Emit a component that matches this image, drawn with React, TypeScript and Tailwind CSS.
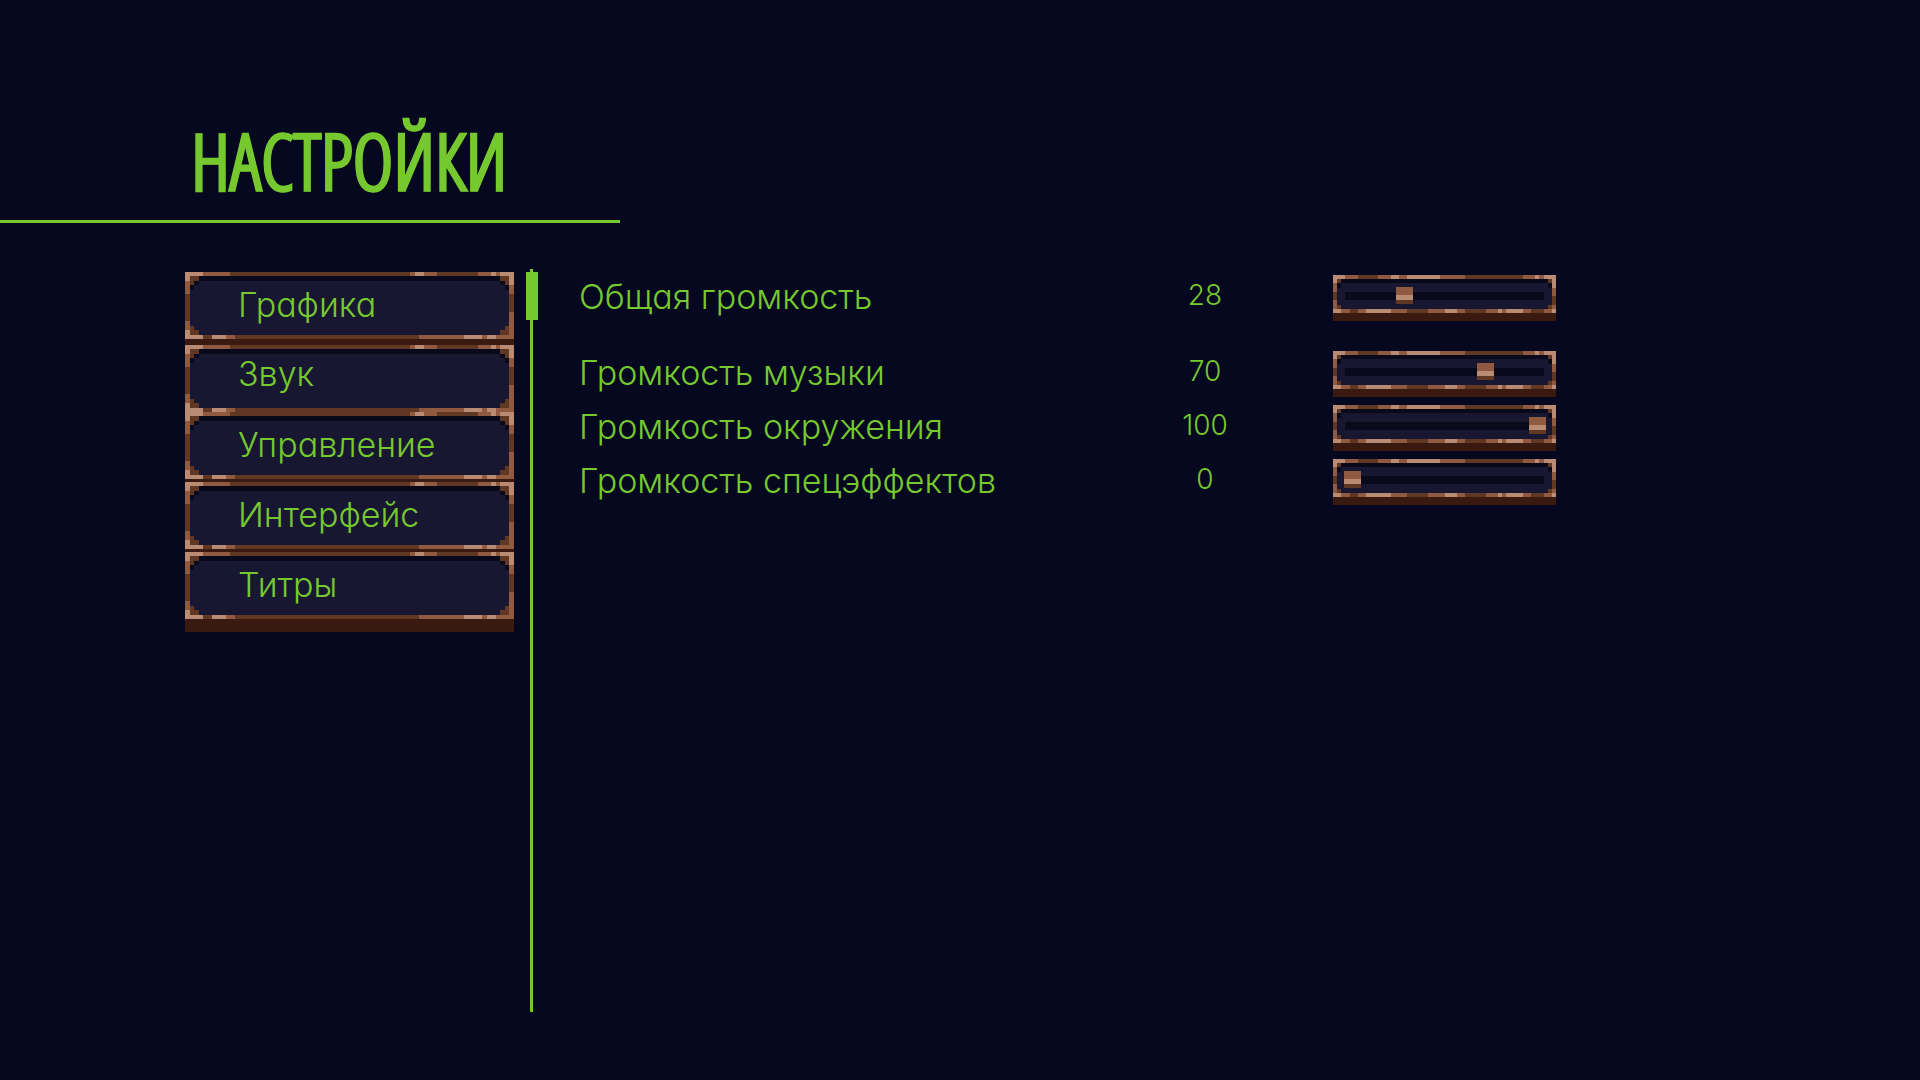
import { useState } from "react";

type Piece = [x: number, y: number, w: number, h: number];

const LIGHT = "#b98b73";
const MID = "#8f5a3f";
const DARK = "#5f3723";
const SHADOW = "#080a1c";
const PANEL = "#181732";

function Pieces({ fill, list }: { fill: string; list: Piece[] }) {
  return (
    <g fill={fill}>
      {list.map(([x, y, w, h], i) => (
        <rect key={i} x={x} y={y} width={w} height={h} />
      ))}
    </g>
  );
}

function ButtonFrame() {
  return (
    <svg
      aria-hidden="true"
      viewBox="0 0 73 15"
      preserveAspectRatio="none"
      shapeRendering="crispEdges"
      className="absolute inset-x-0 top-0 h-[67px] w-full"
    >
      <rect width="73" height="15" fill={DARK} />
      <rect x="1" y="1" width="71" height="13" fill={PANEL} />
      <Pieces fill={SHADOW} list={[[3, 1, 67, 1], [2, 2, 1, 1], [1, 3, 1, 1], [70, 2, 1, 1], [71, 3, 1, 1]]} />
      <Pieces
        fill={DARK}
        list={[[1, 1, 2, 1], [1, 2, 1, 1], [70, 1, 2, 1], [71, 2, 1, 1], [1, 12, 1, 1], [1, 13, 2, 1], [71, 12, 1, 1], [70, 13, 2, 1]]}
      />
      <Pieces
        fill={MID}
        list={[
          [4, 0, 6, 1], [50, 0, 1, 1], [53, 0, 3, 1], [65, 0, 3, 1], [69, 0, 1, 1],
          [9, 14, 2, 1], [52, 14, 10, 1], [66, 14, 1, 1], [69, 14, 4, 1],
          [0, 2, 1, 3], [0, 11, 1, 2], [72, 3, 1, 2], [72, 9, 1, 6],
        ]}
      />
      <Pieces
        fill={LIGHT}
        list={[
          [0, 0, 4, 1], [51, 0, 2, 1], [68, 0, 1, 1], [70, 0, 3, 1],
          [0, 14, 4, 1], [6, 14, 3, 1], [62, 14, 4, 1], [67, 14, 2, 1],
          [0, 0, 1, 2], [0, 13, 1, 2], [72, 0, 1, 3],
        ]}
      />
    </svg>
  );
}

function SliderFrame() {
  return (
    <svg
      aria-hidden="true"
      viewBox="0 0 54 9"
      preserveAspectRatio="none"
      shapeRendering="crispEdges"
      className="absolute inset-x-0 top-0 h-[38px] w-full"
    >
      <rect width="54" height="9" fill={DARK} />
      <rect x="1" y="1" width="52" height="7" fill={PANEL} />
      <Pieces fill={SHADOW} list={[[2, 1, 50, 1], [1, 2, 1, 1], [52, 2, 1, 1], [3, 4, 48, 2]]} />
      <Pieces fill={DARK} list={[[1, 1, 1, 1], [52, 1, 1, 1], [1, 7, 1, 1], [52, 7, 1, 1]]} />
      <Pieces
        fill={MID}
        list={[
          [3, 0, 3, 1], [11, 0, 3, 1], [16, 0, 2, 1], [26, 0, 6, 1], [46, 0, 3, 1], [50, 0, 1, 1],
          [2, 8, 2, 1], [6, 8, 2, 1], [14, 8, 4, 1], [23, 8, 4, 1], [30, 8, 2, 1], [37, 8, 3, 1], [41, 8, 1, 1], [46, 8, 2, 1], [51, 8, 2, 1],
          [0, 2, 1, 2], [0, 6, 1, 2], [53, 3, 1, 2], [53, 7, 1, 1],
        ]}
      />
      <Pieces
        fill={LIGHT}
        list={[
          [0, 0, 3, 1], [14, 0, 2, 1], [18, 0, 8, 1], [49, 0, 1, 1], [51, 0, 3, 1],
          [0, 8, 2, 1], [8, 8, 6, 1], [27, 8, 3, 1], [40, 8, 1, 1], [42, 8, 4, 1], [53, 8, 1, 1],
          [0, 0, 1, 2], [53, 0, 1, 3],
        ]}
      />
    </svg>
  );
}

const tabs = [
  { label: "Графика", size: "h-[73px]", text: "leading-[66px]" },
  { label: "Звук", size: "h-[67px]", text: "leading-[58px]" },
  { label: "Управление", size: "h-[70px]", text: "leading-[66px]" },
  { label: "Интерфейс", size: "h-[70px]", text: "leading-[66px]" },
  { label: "Титры", size: "h-[80px]", text: "leading-[66px]" },
];

const volumes = [
  { id: "master", label: "Общая громкость", value: 28, start: 28, row: "mb-[22px]" },
  { id: "music", label: "Громкость музыки", value: 70, start: 72, row: "" },
  { id: "ambient", label: "Громкость окружения", value: 100, start: 100, row: "" },
  { id: "effects", label: "Громкость спецэффектов", value: 0, start: 0, row: "" },
];

function VolumeRow({ id, label, value, start, row }: (typeof volumes)[number]) {
  const [position, setPosition] = useState(start);
  const shown = position === start ? value : position;
  return (
    <div className={`flex h-[54px] items-start ${row}`}>
      <label htmlFor={id} className="flex-1 whitespace-nowrap text-[34px] leading-[44px]">
        {label}
      </label>
      <output htmlFor={id} className="w-[100px] text-center text-[28px] leading-[40px]">
        {shown}
      </output>
      <div className="relative ml-[78px] h-[46px] w-[223px] bg-[#3a1910]">
        <SliderFrame />
        <input
          id={id}
          type="range"
          min={0}
          max={100}
          value={position}
          onChange={(e) => setPosition(Number(e.target.value))}
          className="absolute left-[11px] top-[12px] h-[17px] w-[202px] cursor-pointer appearance-none bg-transparent [&::-webkit-slider-thumb]:h-[17px] [&::-webkit-slider-thumb]:w-[17px] [&::-webkit-slider-thumb]:appearance-none [&::-webkit-slider-thumb]:bg-[linear-gradient(#8f5a3f_8px,#b98b73_8px,#b98b73_13px,#5f3723_13px)]"
        />
      </div>
    </div>
  );
}

export default function App() {
  return (
    <main className="flex min-h-screen flex-col bg-[#05081e] pb-[68px] pt-[120px] font-['Inter',sans-serif] font-light text-[#76c82f]">
      <h1 className="pl-[191px] font-['Open_Sans_Condensed_Light','Open_Sans_Condensed',sans-serif] text-[78px] font-bold leading-[80px] [-webkit-text-stroke:1px_#76c82f]">
        НАСТРОЙКИ
      </h1>
      <hr className="mt-5 h-[3px] w-[620px] border-0 bg-[#76c82f]" />
      <div className="mt-[46px] flex flex-1 pl-[185px]">
        <nav className="w-[329px] shrink-0 pt-[3px] [font-feature-settings:'cv11']">
          {tabs.map((tab) => (
            <button
              key={tab.label}
              type="button"
              className={`relative block w-full cursor-pointer bg-[#3a1910] text-left ${tab.size}`}
            >
              <ButtonFrame />
              <span className={`absolute left-[53px] top-0 text-[34px] ${tab.text}`}>{tab.label}</span>
            </button>
          ))}
        </nav>
        <div className="relative ml-3 flex w-3 shrink-0 pl-1">
          <div className="w-[3px] bg-[#76c82f]" />
          <div className="absolute inset-x-0 top-[3px] h-12 bg-[#76c82f]" />
        </div>
        <section className="ml-[41px] max-w-[977px] flex-1 pt-[6px] [font-feature-settings:'cv11']">
          {volumes.map((v) => (
            <VolumeRow key={v.id} {...v} />
          ))}
        </section>
      </div>
    </main>
  );
}
